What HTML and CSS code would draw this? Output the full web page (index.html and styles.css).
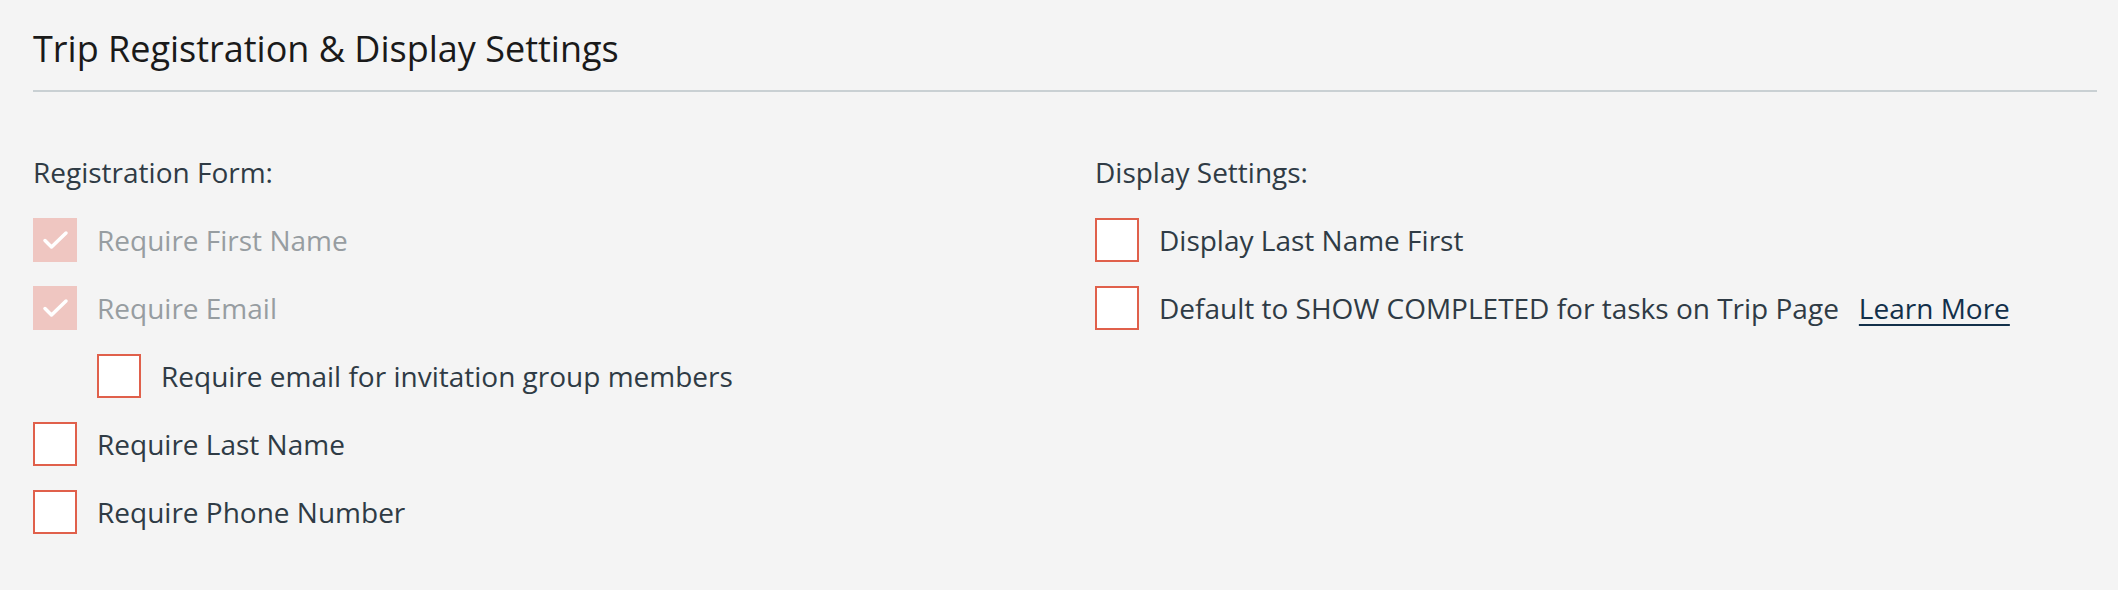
FILE: index.html
```html
<!DOCTYPE html>
<html lang="en">
<head>
  <meta charset="UTF-8">
  <title>Trip Registration &amp; Display Settings</title>
  <link rel="stylesheet" href="styles.css">
</head>
<body>

<main class="settings">
  <h1 class="settings-title">Trip Registration &amp; Display Settings</h1>

  <div class="settings-grid">
    <!-- left column -->
    <section class="settings-col">
      <h2 class="col-heading">Registration Form:</h2>
      <ul class="option-list">
        <li class="option is-disabled">
          <span class="box is-checked">
            <svg viewBox="0 0 44 44" width="44" height="44"><path d="M12 22.5 L18.5 29 L33 15" /></svg>
          </span>
          <span class="label">Require First Name</span>
        </li>
        <li class="option is-disabled">
          <span class="box is-checked">
            <svg viewBox="0 0 44 44" width="44" height="44"><path d="M12 22.5 L18.5 29 L33 15" /></svg>
          </span>
          <span class="label">Require Email</span>
        </li>
        <li class="option option-sub">
          <span class="box"></span>
          <span class="label">Require email for invitation group members</span>
        </li>
        <li class="option">
          <span class="box"></span>
          <span class="label">Require Last Name</span>
        </li>
        <li class="option">
          <span class="box"></span>
          <span class="label">Require Phone Number</span>
        </li>
      </ul>
    </section>

    <!-- right column -->
    <section class="settings-col">
      <h2 class="col-heading">Display Settings:</h2>
      <ul class="option-list">
        <li class="option">
          <span class="box"></span>
          <span class="label">Display Last Name First</span>
        </li>
        <li class="option">
          <span class="box"></span>
          <span class="label">Default to SHOW COMPLETED for tasks on Trip Page</span>
          <a class="learn-more" href="#">Learn More</a>
        </li>
      </ul>
    </section>
  </div>
</main>

</body>
</html>
```

FILE: styles.css
```css
:root {
  --bg-color: #f4f4f4;
  --title-color: #1a1a1a;
  --text-color: #2f3b45;
  --muted-color: #979da1;
  --accent-color: #e0604b;
  --checked-bg: #efc6c1;
  --rule-color: #c9d0d3;
  --link-color: #12304a;
}
* { box-sizing: border-box; }
body {
  margin: 0;
  background-color: var(--bg-color);
  font-family: 'Open Sans', sans-serif;
  color: var(--text-color);
}
.settings {
  padding: 0 21px 0 33px;
}
.settings-title {
  margin: 0;
  padding: 24px 0 17px;
  font-size: 36px;
  line-height: 49px;
  font-weight: 400;
  color: var(--title-color);
  border-bottom: 2px solid var(--rule-color);
}
.settings-grid {
  display: grid;
  grid-template-columns: 1fr 1fr;
  column-gap: 60px;
  padding-top: 60px;
}
.col-heading {
  margin: 0 0 26px;
  font-size: 28px;
  line-height: 40px;
  font-weight: 400;
  color: var(--text-color);
}
.option-list {
  list-style: none;
  margin: 0;
  padding: 0;
  display: flex;
  flex-direction: column;
  gap: 24px;
}
.option {
  display: flex;
  align-items: center;
  height: 44px;
}
.option-sub { margin-left: 64px; }
.box {
  width: 44px;
  height: 44px;
  flex: none;
  margin-right: 20px;
  border: 2px solid var(--accent-color);
  background-color: #fff;
}
.box.is-checked {
  border: none;
  background-color: var(--checked-bg);
}
.box svg {
  display: block;
  fill: none;
  stroke: #fff;
  stroke-width: 3.5;
  stroke-linecap: round;
  stroke-linejoin: round;
}
.label {
  font-size: 28px;
  line-height: 40px;
  white-space: nowrap;
}
.is-disabled .label { color: var(--muted-color); }
.learn-more {
  margin-left: 20px;
  font-size: 28px;
  line-height: 40px;
  color: var(--link-color);
  text-decoration: underline;
  text-decoration-thickness: 2px;
  text-underline-offset: 5px;
  white-space: nowrap;
}
```
